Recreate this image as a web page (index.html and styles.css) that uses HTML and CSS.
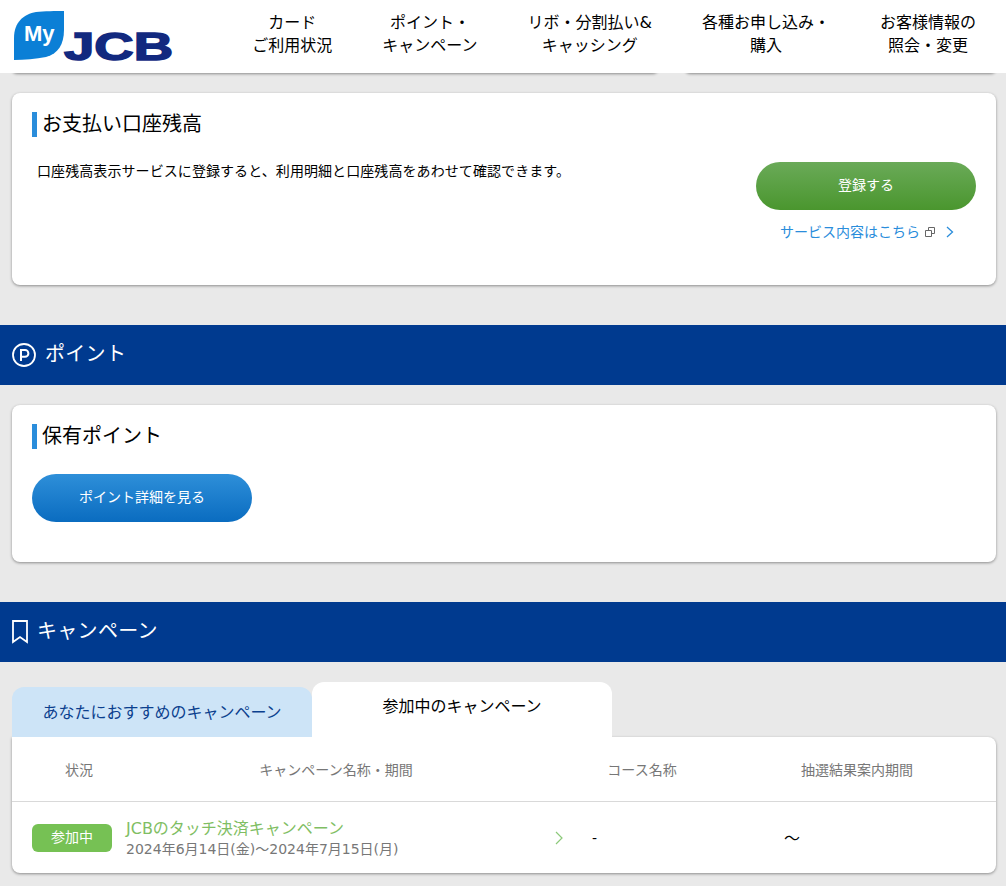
FILE: index.html
```html
<!DOCTYPE html>
<html lang="ja">

<head>
    <meta charset="UTF-8">
    <title>MyJCB</title>
    <link rel="stylesheet" href="styles.css">
</head>

<body>
    <header class="header">
        <a class="logo" href="javascript:;">
            <svg width="160" height="58" viewBox="0 0 160 58">
                <path d="M0 50V28C0 12 10 4 22 2C30 1 42 1 50 1V20C50 34 44 44 32 47C22 49 10 50 0 50Z" fill="#0b7fd6" />
                <text class="logo-my" x="10" y="31">My</text>
                <text class="logo-jcb" x="50" y="49.500" textLength="109" lengthAdjust="spacingAndGlyphs">JCB</text>
            </svg>
        </a>
        <nav class="gnav">
            <a href="javascript:;">カード<br>ご利用状況</a>
            <a href="javascript:;">ポイント・<br>キャンペーン</a>
            <a href="javascript:;">リボ・分割払い&amp;<br>キャッシング</a>
            <a href="javascript:;">各種お申し込み・<br>購入</a>
            <a href="javascript:;">お客様情報の<br>照会・変更</a>
        </nav>
    </header>
    <!-- 固定ヘッダーの下に隠れたカードの影 -->
    <div class="peek">
        <div class="peek-card peek-left"></div>
        <div class="peek-card peek-right"></div>
    </div>

    <section class="card card-balance">
        <h2 class="card-title">お支払い口座残高</h2>
        <div class="balance">
            <p class="balance-text">口座残高表示サービスに登録すると、利用明細と口座残高をあわせて確認できます。</p>
            <div class="balance-side">
                <a class="btn btn-green" href="javascript:;">登録する</a>
                <a class="more" href="javascript:;">サービス内容はこちら
                    <svg width="10" height="10" viewBox="0 0 10 10" fill="none" stroke="#666">
                        <path d="M.5 3.500h6v6h-6z" />
                        <path d="M3.500 3V.5h6v6H7" />
                    </svg>
                    <svg class="more-arrow" width="8" height="12" viewBox="0 0 8 12" fill="none" stroke="#2a8ddb" stroke-width="1.300">
                        <path d="M1 1l5.500 5L1 11" />
                    </svg>
                </a>
            </div>
        </div>
    </section>

    <h2 class="band">
        <svg width="24" height="24" viewBox="0 0 24 24" fill="none" stroke="#fff">
            <circle cx="12" cy="12" r="11" stroke-width="1.800" />
            <path d="M9 18V7h4a3.300 3.300 0 0 1 0 6.800H9" stroke-width="2" />
        </svg>
        <span class="band-text">ポイント</span>
    </h2>

    <section class="card card-point">
        <h2 class="card-title">保有ポイント</h2>
        <a class="btn btn-blue" href="javascript:;">ポイント詳細を見る</a>
    </section>

    <h2 class="band">
        <svg width="16" height="24" viewBox="0 0 16 24" fill="none" stroke="#fff" stroke-width="1.800">
            <path d="M1 1h14v21l-7-5-7 5z" />
        </svg>
        <span class="band-text">キャンペーン</span>
    </h2>

    <div class="tabs">
        <a class="tab" href="javascript:;">あなたにおすすめのキャンペーン</a>
        <a class="tab tab-on" href="javascript:;">参加中のキャンペーン</a>
    </div>

    <section class="table-card">
        <div class="row row-head">
            <span>状況</span>
            <span>キャンペーン名称・期間</span>
            <span>コース名称</span>
            <span>抽選結果案内期間</span>
        </div>
        <div class="row row-body">
            <span class="status">参加中</span>
            <a class="camp" href="javascript:;">
                <span class="camp-text">
                    <span class="camp-name">JCBのタッチ決済キャンペーン</span>
                    <span class="camp-date">2024年6月14日(金)～2024年7月15日(月)</span>
                </span>
                <svg width="8" height="14" viewBox="0 0 8 14" fill="none" stroke="#8cc97a" stroke-width="1.200">
                    <path d="M1 1l6 6-6 6" />
                </svg>
            </a>
            <span class="course">-</span>
            <span class="term">～</span>
        </div>
    </section>
</body>

</html>
```

FILE: styles.css
```css
* {
    box-sizing: border-box;
}

body {
    margin: 0;
    height: 886px;
    overflow: hidden;
    background: #e9e9e9;
    color: #000;
    font-size: 14px;
    font-family: "DejaVu Sans", "Noto Sans CJK JP", sans-serif;
}

a {
    text-decoration: none;
    color: inherit;
}

h2,
p {
    margin: 0;
    font-weight: normal;
}

.header {
    position: relative;
    z-index: 1;
    display: flex;
    justify-content: space-between;
    align-items: center;
    height: 73px;
    padding: 0 30px 6px 14px;
    background: #fff;
}

.logo {
    display: block;
    align-self: flex-start;
    height: 58px;
    margin-top: 10px;
}

.logo-my {
    font: bold 22px "Liberation Sans", sans-serif;
    fill: #fff;
}

.logo-jcb {
    font: bold 38px "Liberation Sans", sans-serif;
    fill: #12297f;
    stroke: #12297f;
    stroke-width: 1.500px;
}

.gnav {
    display: flex;
    gap: 50px;
    font-size: 16px;
    line-height: 23px;
    text-align: center;
}

.peek {
    display: flex;
    gap: 27px;
    height: 0;
    margin: 0 10px 0 12px;
}

.peek-card {
    height: 10px;
    margin-top: -10px;
    background: #fff;
    border-radius: 8px;
    box-shadow: 0 1px 3px rgba(0, 0, 0, .4);
}

.peek-left {
    width: 646px;
}

.peek-right {
    flex: 1;
}

.card {
    margin: 20px 10px 0 12px;
    padding: 19px 20px 0;
    background: #fff;
    border-radius: 8px;
    box-shadow: 0 1px 3px rgba(0, 0, 0, .4);
}

.card-balance {
    height: 192px;
}

.card-point {
    height: 157px;
}

.card-title {
    height: 25px;
    padding-left: 5px;
    border-left: 5px solid #2a8ddb;
    font-size: 20px;
    line-height: 25px;
}

.balance {
    display: flex;
    justify-content: space-between;
    margin-top: 25px;
}

.balance-text {
    padding-left: 5px;
    letter-spacing: .08px;
    line-height: 18px;
}

.balance-side {
    display: flex;
    flex-direction: column;
    align-items: center;
    width: 220px;
}

.btn {
    display: block;
    width: 220px;
    height: 48px;
    border-radius: 24px;
    color: #fff;
    line-height: 46px;
    text-align: center;
}

.btn-green {
    background: linear-gradient(#6aaa58, #4a962e);
}

.btn-blue {
    margin-top: 25px;
    background: linear-gradient(#2e8fd9, #0a6cc0);
}

.more {
    display: flex;
    align-items: center;
    gap: 5px;
    margin-top: 12px;
    padding-left: 2px;
    color: #2a8ddb;
    line-height: 20px;
}

.more-arrow {
    margin-left: 6px;
}

.band {
    display: flex;
    align-items: center;
    gap: 9px;
    height: 60px;
    margin-top: 40px;
    padding-left: 12px;
    background: #003a8f;
    color: #fff;
    font-size: 20px;
}

.band-text {
    margin-top: -6px;
    letter-spacing: .3px;
}

.tabs {
    display: flex;
    align-items: flex-end;
    height: 75px;
    margin: 0 10px 0 12px;
}

.tab {
    width: 300px;
    height: 50px;
    border-radius: 12px 12px 0 0;
    background: #cde4f7;
    color: #0b3f8e;
    font-size: 16px;
    line-height: 52px;
    text-align: center;
}

.tab-on {
    height: 55px;
    background: #fff;
    color: #000;
    line-height: 50px;
}

.table-card {
    height: 136px;
    margin: 0 10px 0 12px;
    background: #fff;
    border-radius: 0 8px 8px 8px;
    box-shadow: 0 1px 3px rgba(0, 0, 0, .4);
}

.row {
    display: grid;
    align-items: center;
}

.row-head {
    grid-template-columns: 134px 380px 232px 198px;
    height: 65px;
    border-bottom: 1px solid #d9d9d9;
    color: #777;
    text-align: center;
}

.row-body {
    grid-template-columns: 114px 466px 192px 1fr;
    height: 71px;
}

.status {
    justify-self: end;
    width: 80px;
    height: 28px;
    margin-right: 14px;
    background: #76c154;
    border-radius: 6px;
    color: #fff;
    line-height: 27px;
    text-align: center;
}

.camp {
    display: flex;
    justify-content: space-between;
    align-items: center;
    padding-right: 29px;
}

.camp-text {
    display: flex;
    flex-direction: column;
}

.camp-name {
    color: #7fbe63;
    font-size: 16px;
    line-height: 22px;
}

.camp-date {
    color: #777;
    line-height: 18px;
}

.term {
    margin-top: -2px;
    font-size: 16px;
}
```
